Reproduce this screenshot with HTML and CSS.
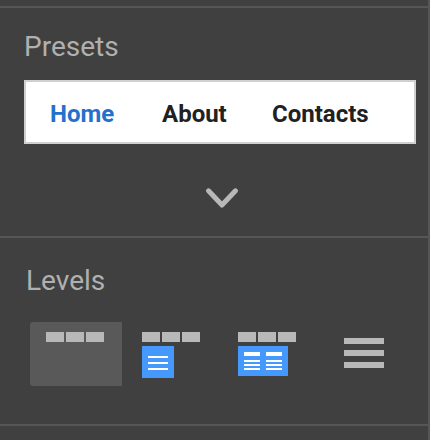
FILE: index.html
```html
<!DOCTYPE html>
<html lang="en">
<head>
<meta charset="utf-8">
<title>Menu settings</title>
<link rel="stylesheet" href="styles.css">
</head>
<body>
<main class="panel">
  <section class="section presets">
    <h2 class="title">Presets</h2>
    <nav class="preset">
      <span class="preset-item active">Home</span>
      <span class="preset-item about">About</span>
      <span class="preset-item contacts">Contacts</span>
    </nav>
    <svg class="chevron" width="36" height="24" viewBox="0 0 36 24"><path d="M4.5 4.8 18 19 31.5 4.8" fill="none" stroke="#b8b8b8" stroke-width="5" stroke-linecap="round" stroke-linejoin="round"/></svg>
  </section>
  <section class="section levels">
    <h2 class="title">Levels</h2>
    <div class="options">
      <button class="option selected" aria-label="One level">
        <svg width="58" height="10" fill="#b8b8b8"><path d="M0 0h18v10H0zM20 0h18v10H20zM40 0h18v10H40z"/></svg>
      </button>
      <button class="option dropdown" aria-label="Dropdown">
        <svg width="58" height="46"><path fill="#b8b8b8" d="M0 0h18v10H0zM20 0h18v10H20zM40 0h18v10H40z"/><path fill="#4599fd" d="M0 14h32v32H0z"/><path fill="#fff" d="M6 24h20v2H6zM6 30h20v2H6zM6 36h20v2H6z"/></svg>
      </button>
      <button class="option mega" aria-label="Mega menu">
        <svg width="58" height="44"><path fill="#b8b8b8" d="M0 0h18v10H0zM20 0h18v10H20zM40 0h18v10H40z"/><path fill="#4599fd" d="M0 14h50v30H0z"/><path fill="#fff" d="M6 20h16v4H6zM28 20h16v4H28zM6 28h16v2H6zM28 28h16v2H28zM6 32h16v2H6zM28 32h16v2H28zM6 36h16v2H6zM28 36h16v2H28z"/></svg>
      </button>
      <button class="option burger" aria-label="Hamburger">
        <svg width="40" height="30" fill="#b8b8b8"><path d="M0 0h40v6H0zM0 12h40v6H0zM0 24h40v6H0z"/></svg>
      </button>
    </div>
  </section>
  <div class="section"></div>
</main>
</body>
</html>
```
FILE: styles.css
```css
* {
  box-sizing: border-box;
}

body {
  margin: 0;
  background: #404040;
  font-family: Roboto, "Liberation Sans", sans-serif;
}

.panel {
  height: 440px;
  padding-top: 6px;
  border-right: 2px solid #565656;
  overflow: hidden;
}

.section {
  border-top: 2px solid #565656;
}

.presets {
  display: flex;
  flex-direction: column;
  height: 230px;
  padding: 23px 12px 0 24px;
}

.title {
  margin: 0;
  color: #b0b0b0;
  font-size: 28px;
  font-weight: 400;
  line-height: 32px;
}

.preset {
  display: flex;
  align-items: center;
  height: 64px;
  margin-top: 17px;
  padding: 4px 0 0 24px;
  border: 2px solid #d0d0d0;
  background: #fff;
  color: #212121;
  font-size: 24px;
  font-weight: 700;
  line-height: 28px;
}

.preset-item {
  width: 112px;
}

.about {
  width: 110px;
}

.contacts {
  width: auto;
}

.active {
  color: #2470cc;
}

.chevron {
  margin: 42px 0 0 180px;
}

.levels {
  height: 188px;
  padding: 27px 0 0 26px;
}

.options {
  display: flex;
  margin: 25px 0 0 4px;
}

.option {
  display: flex;
  align-items: flex-start;
  width: 96px;
  height: 64px;
  padding: 10px 0 0 16px;
  border: 0;
  background: none;
}

.selected {
  width: 92px;
  margin-right: 4px;
  border-radius: 3px 0 0 3px;
  background: #595959;
}

.burger {
  padding-top: 16px;
  padding-left: 26px;
}
```
